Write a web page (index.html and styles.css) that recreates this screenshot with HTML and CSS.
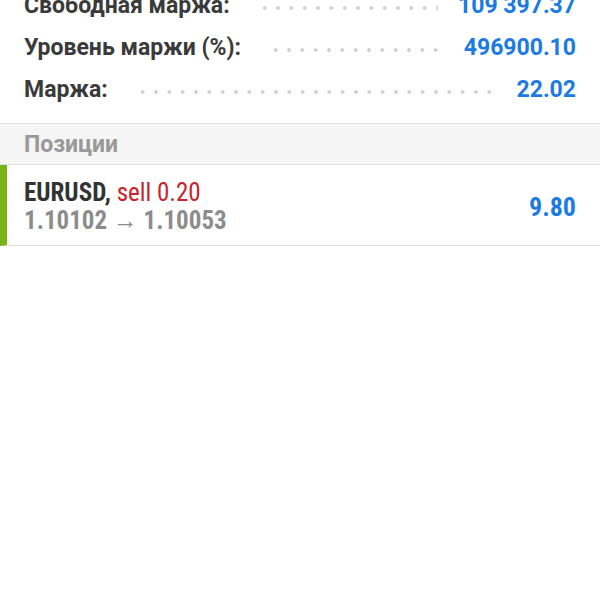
FILE: index.html
```html
<!DOCTYPE html>
<html lang="ru">
<head>
    <meta charset="UTF-8">
    <meta name="viewport" content="width=device-width, initial-scale=1.0">
    <title>Торговля</title>
    <link rel="stylesheet" href="styles.css">
</head>
<body>
    <div class="summary">
        <div class="summary-row">
            <span class="summary-label">Свободная маржа:</span>
            <span class="summary-dots"></span>
            <span class="summary-value">109 397.37</span>
        </div>
        <div class="summary-row">
            <span class="summary-label">Уровень маржи (%):</span>
            <span class="summary-dots"></span>
            <span class="summary-value">496900.10</span>
        </div>
        <div class="summary-row">
            <span class="summary-label">Маржа:</span>
            <span class="summary-dots"></span>
            <span class="summary-value">22.02</span>
        </div>
    </div>

    <div class="section-header">Позиции</div>

    <div class="position">
        <div class="position-info">
            <div class="position-title">
                <span class="position-symbol">EURUSD,</span>
                <span class="position-type">sell 0.20</span>
            </div>
            <div class="position-prices">1.10102 → 1.10053</div>
        </div>
        <div class="position-profit">9.80</div>
    </div>
</body>
</html>
```

FILE: styles.css
```css
* {
    margin: 0;
    padding: 0;
    box-sizing: border-box;
}

body {
    font-family: Roboto, 'Noto Sans', sans-serif;
    background: white;
    color: #333;
    overflow: hidden;
}

.summary {
    margin-top: -16px;
    padding-bottom: 13px;
}

.summary-row {
    display: flex;
    align-items: center;
    height: 42px;
    padding: 0 24px;
    font-size: 23px;
    font-weight: bold;
}

.summary-label {
    color: #3a3a3a;
}

.summary-dots {
    flex: 1;
    align-self: stretch;
    margin: 0 20px 0 28px;
    background-image: radial-gradient(circle, #d2d2d2 1.6px, transparent 2.1px);
    background-size: 13.33px 6px;
    background-repeat: repeat-x;
    background-position: 0 21px;
}

.summary-value {
    color: #1b7ae3;
}

.section-header {
    height: 42px;
    display: flex;
    align-items: center;
    padding: 0 24px;
    background: #f5f5f5;
    border-top: 1px solid #dedede;
    border-bottom: 1px solid #dedede;
    color: #999;
    font-size: 23px;
    font-weight: bold;
}

.position {
    display: flex;
    align-items: center;
    height: 81px;
    padding: 3px 24px 0 17px;
    border-left: 7px solid #7ab317;
    border-bottom: 1px solid #dedede;
    font-family: 'Roboto Condensed', Roboto, sans-serif;
}

.position-info {
    flex: 1;
}

.position-title {
    font-size: 25px;
    line-height: 28px;
}

.position-symbol {
    font-weight: bold;
    color: #333;
}

.position-type {
    color: #c8232c;
}

.position-prices {
    font-size: 25px;
    line-height: 28px;
    font-weight: bold;
    color: #8c8c8c;
}

.position-profit {
    font-size: 26px;
    font-weight: bold;
    color: #1b7ae3;
}
```
